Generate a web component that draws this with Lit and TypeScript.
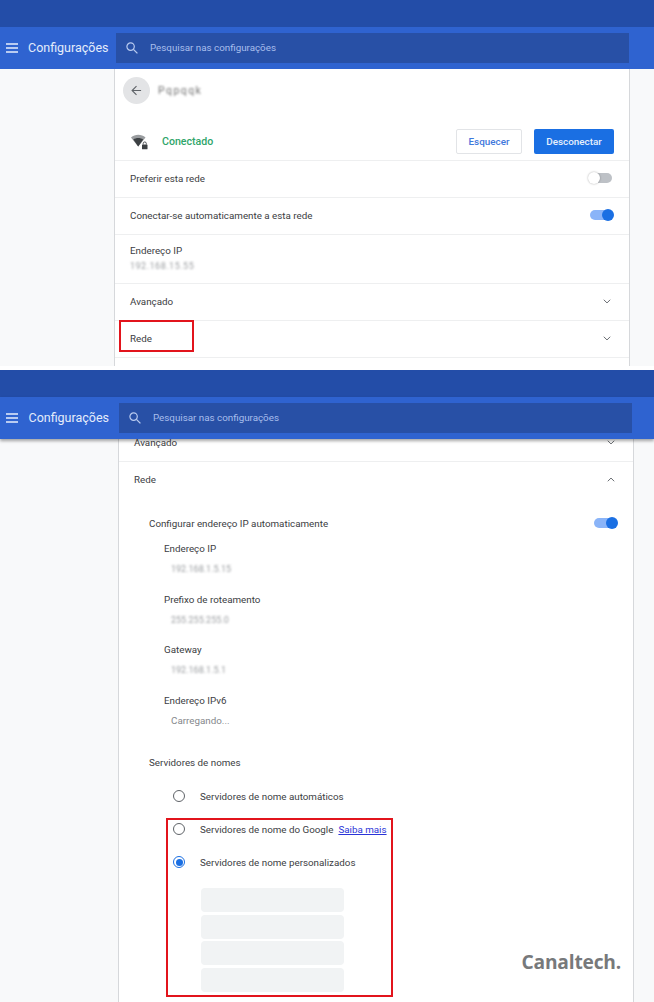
import { LitElement, html, css, svg } from "lit";
import { customElement } from "lit/decorators.js";

const menuIcon = html`<svg class="menu" viewBox="0 0 12 10"><path d="M0 1h12M0 5h12M0 9h12" stroke="#e8eefb" stroke-width="1.3" fill="none"/></svg>`;
const searchIcon = html`<svg class="search-ic" viewBox="0 0 12 12"><circle cx="4.6" cy="4.6" r="3.7" stroke="#b9cbf0" stroke-width="1.2" fill="none"/><path d="M7.4 7.4L11.4 11.4" stroke="#b9cbf0" stroke-width="1.3"/></svg>`;
const chevron = (up = false) => html`<svg class="chev" viewBox="0 0 10 6"><path d=${up ? "M1 5.2L5 1.2L9 5.2" : "M1 .8L5 4.8L9 .8"} stroke="#5f6368" stroke-width="1.2" fill="none"/></svg>`;

const toolbar = (cls: string) => html`
  <div class="top"></div>
  <header class="bar ${cls}">
    ${menuIcon}
    <span class="title">Configurações</span>
    <div class="search">${searchIcon}<span class="placeholder">Pesquisar nas configurações</span></div>
  </header>`;

const toggle = (on: boolean) => html`<span class="toggle ${on ? "on" : ""}"><i></i></span>`;

const field = (label: string, value: string) => html`
  <div class="field">
    <div class="flabel">${label}</div>
    <div class="fvalue blur">${value}</div>
  </div>`;

const radio = (label: string, on = false, link = "") => html`
  <div class="radio-row">
    <span class="radio ${on ? "on" : ""}"></span>
    <span>${label}</span>
    ${link ? html`<a class="link">${link}</a>` : ""}
  </div>`;

@customElement("app-root")
export class AppRoot extends LitElement {
  static styles = css`
    :host { display: block; width: 654px; height: 1002px; overflow: hidden; background: #fff;
      font-family: Roboto, "Liberation Sans", sans-serif; font-size: 9.8px; color: #3c4043; }
    .shot { background: #f8f9fa; overflow: hidden; position: relative; }
    .one { height: 366px; margin-bottom: 4px; }
    .two { height: 632px; }
    .top { height: 27px; background: #234da8; }
    .bar { height: 42px; background: #2f63d0; display: flex; align-items: center; position: relative; z-index: 2; }
    .bar.shadow { box-shadow: 0 2px 3px rgba(0,0,0,.35); }
    .menu { width: 12px; height: 10px; margin-left: 5.5px; flex: none; }
    .title { font-size: 12.5px; color: #e4ecfb; margin-left: 10.5px; width: 88px; flex: none; white-space: nowrap; padding-bottom: 1.5px; }
    .two .title { margin-left: 11px; width: 90.5px; }
    .search { width: 513px; height: 30px; background: #2850a6; display: flex; align-items: center; color: #a9bfec; font-size: 9.8px; flex: none; }
    .placeholder { padding-bottom: 1.5px; }
    .search-ic { width: 12px; height: 12px; margin: 0 12px 0 10px; flex: none; }
    .card { background: #fff; width: 514px; margin-left: 114px; border: solid #d6d8db; border-width: 0 1px; position: relative; }
    .two .card { margin-left: 118px; margin-top: -14px; }
    .head { height: 51px; display: flex; align-items: flex-start; padding: 7.5px 0 0 8px; box-sizing: border-box; gap: 8px; }
    .back { width: 27px; height: 27px; border-radius: 50%; background: #e3e4e6; display: flex; align-items: center; justify-content: center; }
    .back svg { width: 11px; height: 11px; }
    .blur { filter: blur(1px); color: #9a9da0; }
    .name { font-size: 10.4px; line-height: 27px; color: #707070; letter-spacing: 1.5px; filter: blur(1.2px); }
    .status { height: 41px; display: flex; align-items: center; padding: 2px 15px 0; border-bottom: 1px solid #eeeff0; box-sizing: border-box; }
    .wifi { width: 18px; height: 17px; margin-right: 14px; flex: none; }
    .connected { color: #2fa56a; font-weight: 500; font-size: 10.6px; flex: 1; }
    .btn { height: 25px; display: flex; align-items: center; justify-content: center; border-radius: 2px; font-weight: 500; font-size: 9.9px; box-sizing: border-box; }
    .btn.ghost { width: 66px; border: 1px solid #e2e4e7; color: #3f78dc; margin-right: 12px; background: #fff; }
    .btn.solid { width: 80px; background: #1a6fe3; color: #e6effc; }
    .row { height: 37px; display: flex; align-items: center; justify-content: space-between; padding: 0 15px 2px; border-bottom: 1px solid #eeeff0; box-sizing: border-box; position: relative; }
    .row.ip { height: 49px; display: block; padding-top: 9px; }
    .row.ip .fvalue { font-size: 9px; letter-spacing: .5px; margin: 1px 0 0; }
    .row.plain { border-bottom: 0; }
    .chev { width: 8px; height: 5px; flex: none; margin-right: 3.5px; }
    .toggle { width: 22px; height: 10px; border-radius: 5px; background: #bdc1c6; position: relative; flex: none; margin-right: 2px; }
    .toggle i { position: absolute; top: -1px; left: -2px; width: 12px; height: 12px; border-radius: 50%; background: #fff; box-shadow: 0 0 2px rgba(0,0,0,.35); }
    .toggle.on { background: #8ab4f8; }
    .toggle.on i { left: auto; right: -2px; background: #1a6fe3; box-shadow: none; }
    .mark { position: absolute; border: 2px solid #e2141c; box-sizing: border-box; pointer-events: none; }
    .mark.rede { left: 4px; top: -1px; width: 75px; height: 32px; }
    .net { padding: 11px 15px 0 30px; }
    .net-head { display: flex; align-items: center; justify-content: space-between; height: 26px; }
    .fields { padding-left: 15px; margin-top: 6px; }
    .field { height: 50.6px; }
    .flabel { line-height: 14px; }
    .fvalue { margin: 6px 0 0 7px; line-height: 14px; font-size: 9px; }
    .fvalue.load { color: #85888c; font-size: 9.8px; filter: none; }
    .ns-title { margin-top: 11.5px; line-height: 14px; }
    .radios { margin-top: 10px; padding-left: 24px; position: relative; }
    .radio-row { height: 33px; display: flex; align-items: center; }
    .radio { width: 12px; height: 12px; border-radius: 50%; border: 1.5px solid #5f6368; box-sizing: border-box; margin-right: 15px; flex: none; position: relative; }
    .radio.on { border-color: #1a6fe3; }
    .radio.on::after { content: ""; position: absolute; inset: 1.5px; border-radius: 50%; background: #1a6fe3; }
    .link { color: #2a34d8; text-decoration: underline; margin-left: 5px; }
    .inputs { margin: 9px 0 0 28px; display: flex; flex-direction: column; gap: 2.7px; width: 143px; padding-bottom: 20px; }
    .input { height: 24px; background: #f1f3f4; border-radius: 4px; }
    .mark.dns { left: 17px; top: 38px; width: 227px; height: 179px; }
    .brand { position: absolute; right: 33px; bottom: 28px; z-index: 3; font-family: "Open Sans", "Noto Sans", sans-serif; font-weight: 700; font-size: 19.2px; line-height: 24px; color: #77797b; letter-spacing: -.2px; }
  `;

  render() {
    return html`
      <section class="shot one">
        ${toolbar("")}
        <div class="card">
          <div class="head">
            <span class="back"><svg viewBox="0 0 12 12"><path d="M11 6H1.5M6 1.2L1.2 6L6 10.8" stroke="#5f6368" stroke-width="1.2" fill="none"/></svg></span>
            <span class="name">Pqpqqk</span>
          </div>
          <div class="status">
            <svg class="wifi" viewBox="0 0 18 17">
              ${svg`<path d="M1 4.5C5 .8 11.5.8 15.5 4.5L8.2 13.5Z" fill="#9a9da0"/><path d="M3.3 6.5C6 4.5 10.5 4.5 13.2 6.5L8.2 13.5Z" fill="#3c4043"/>
              <rect x="12" y="11.5" width="5.5" height="4.8" rx=".6" fill="#3c4043"/><path d="M13.2 11.5v-1a1.5 1.5 0 013.1 0v1" stroke="#3c4043" fill="none" stroke-width=".9"/>`}
            </svg>
            <span class="connected">Conectado</span>
            <span class="btn ghost">Esquecer</span>
            <span class="btn solid">Desconectar</span>
          </div>
          <div class="row"><span>Preferir esta rede</span>${toggle(false)}</div>
          <div class="row"><span>Conectar-se automaticamente a esta rede</span>${toggle(true)}</div>
          <div class="row ip"><div class="flabel">Endereço IP</div><div class="fvalue blur">192.168.15.55</div></div>
          <div class="row"><span>Avançado</span>${chevron()}</div>
          <div class="row"><span>Rede</span>${chevron()}<div class="mark rede"></div></div>
          <div class="row plain"></div>
        </div>
      </section>
      <section class="shot two">
        ${toolbar("shadow")}
        <div class="card">
          <div class="row"><span>Avançado</span>${chevron()}</div>
          <div class="row plain"><span>Rede</span>${chevron(true)}</div>
          <div class="net">
            <div class="net-head"><span>Configurar endereço IP automaticamente</span>${toggle(true)}</div>
            <div class="fields">
              ${field("Endereço IP", "192.168.1.5.15")}
              ${field("Prefixo de roteamento", "255.255.255.0")}
              ${field("Gateway", "192.168.1.5.1")}
              <div class="field">
                <div class="flabel">Endereço IPv6</div>
                <div class="fvalue load">Carregando...</div>
              </div>
            </div>
            <div class="ns-title">Servidores de nomes</div>
            <div class="radios">
              ${radio("Servidores de nome automáticos")}
              ${radio("Servidores de nome do Google", false, "Saiba mais")}
              ${radio("Servidores de nome personalizados", true)}
              <div class="inputs">
                <div class="input"></div><div class="input"></div><div class="input"></div><div class="input"></div>
              </div>
              <div class="mark dns"></div>
            </div>
          </div>
        </div>
        <div class="brand">Canaltech.</div>
      </section>
    `;
  }
}
